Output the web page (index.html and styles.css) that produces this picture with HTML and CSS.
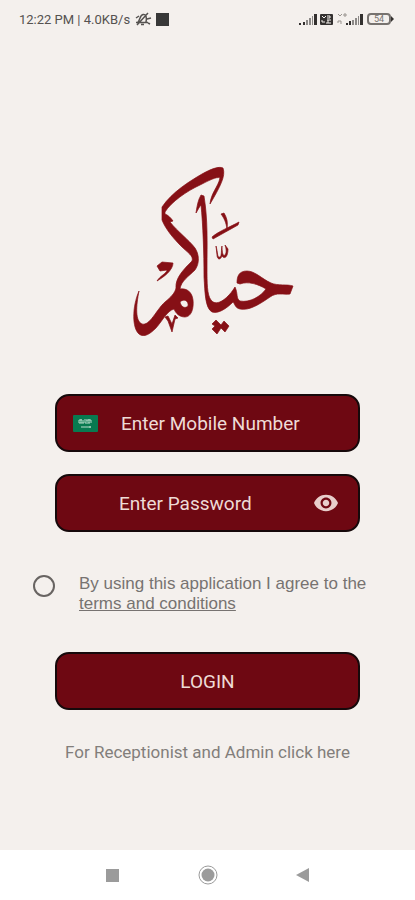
FILE: index.html
```html
<!DOCTYPE html>
<html lang="en">
<head>
<meta charset="utf-8">
<meta name="viewport" content="width=device-width, initial-scale=1">
<title>Login</title>
<link rel="stylesheet" href="styles.css">
</head>
<body>
<header class="status">
  <div class="status-group">
    <span>12:22 PM | 4.0KB/s</span>
    <svg class="mute" viewBox="0 0 18 16" width="18" height="16" aria-hidden="true">
      <path d="M4 11C6 9 6 4 9 3.500C12 3 13 6 12 11M2 11.500H14M7 13.500H10M2 7L5 5M13 8L17 7M14 12L16 13M3 14L14 2"/>
    </svg>
    <span class="block"></span>
  </div>
  <svg viewBox="0 0 96 16" width="96" height="16" aria-hidden="true">
    <g class="ink">
      <path d="M0 12h2v2H0zM4 11h2v3H4zM15 3h3v11h-3z"/>
      <path class="dim" d="M7 9h2v5H7zM10 7h2v7h-2zM13 5h1v9h-1z"/>
      <rect x="21" y="3" width="13" height="11" rx="1"/>
      <path d="M47 12h2v2h-2zM50 10h2v4h-2zM61 3h3v11h-3z"/>
      <path class="dim" d="M53 9h2v5h-2zM56 7h2v7h-2zM59 5h1v9h-1z"/>
    </g>
    <path class="volte" d="M23 5l2 2 2-2M28 5h3v2h-3M23 9v2h3M28 9h4M29 9v3M27 12h5"/>
    <path class="tiny" d="M39 3l2 2 2-2M44 4h4M46 2v4M39 12v-2h3M42 10v3"/>
    <rect class="battery" x="69" y="3" width="22" height="10" rx="3"/>
    <path class="ink" d="M92 5l3 3-3 3z"/>
    <text class="level" x="80" y="11">54</text>
  </svg>
</header>

<main class="screen">
  <svg class="logo" viewBox="130 164 166 172" width="166" height="172" role="img" aria-label="حياكم">
    <path d="M210 204C211 193 218 187 220 178C217 176 208 181 200 185C187 191 171 202 165 212L165 214C168 215 171 218 173 221L170 222C178 232 189 240 195 248C199 254 200 263 195 270C189 276 181 281 180 289C187 288 192 292 193 300C194 309 191 317 185 317C180 317 176 314 174 309C167 311 163 320 156 328C150 334 144 338 139 334C132 328 132 307 139 291C136 306 135 321 142 324C150 326 156 310 165 302C171 297 175 293 176 288C175 278 184 269 192 261C194 256 187 252 182 247C174 239 166 230 162 220L162 207C172 192 190 181 202 174C211 169 219 166 223 168C226 176 220 187 210 204ZM180 302C181 307 185 309 188 306C189 301 184 298 180 302Z" fill-rule="evenodd"/>
    <path d="M196 213C197 206 198 200 201 195L204 196C208 220 207 244 207 267C207 283 207 295 211 300C217 308 229 297 235 287C238 293 236 299 240 301C250 303 261 296 266 289C258 284 248 281 240 284L237 283C237 276 239 271 247 271C255 271 262 279 271 283C278 286 287 284 293 286L290 294C283 295 277 292 270 297C260 304 249 311 240 309C235 308 235 304 233 302C226 309 218 314 212 312C205 308 205 292 204 277C204 253 203 225 201 205C199 207 198 210 196 213Z"/>
    <path d="M221 214L224 213C227 218 228 222 227 229C226 222 224 218 221 214ZM212 237C219 231 230 227 239 222L238 225C230 230 221 234 213 239Z"/>
    <path d="M216 246C218 253 217 258 220 257C222 256 221 249 222 246C222 252 223 257 225 255C227 252 226 248 225 245L228 249C228 256 225 260 222 256C220 261 217 259 217 255Z"/>
    <path d="M157 266L162 262L173 263C173 270 164 277 157 281C160 276 167 273 167 270L160 271Z"/>
    <path d="M165 317L168 316L172 324L175 315L178 318L175 319L172 332L168 321Z"/>
    <path d="M216 320L221 325L224 321L229 326L225 332L221 328L217 334L212 329L215 326L212 324Z"/>
  </svg>

  <form class="form">
    <div class="field">
      <svg class="flag" viewBox="0 0 25 17" width="25" height="17" aria-hidden="true">
        <rect class="flag-bg" width="25" height="17" rx="1"/>
        <path class="flag-mark" d="M6 8V5M8 8V4M6 8h5M10 5v3M12 4v4M12 8h5M14 5v2M16 4v4M18 5v3M6 5h3M13 5h5"/>
        <path class="flag-sword" d="M8 12H18M17 11v2"/>
      </svg>
      <input class="entry" type="tel" placeholder="Enter Mobile Number" aria-label="Enter Mobile Number">
    </div>
    <div class="field">
      <input class="entry entry-password" type="password" placeholder="Enter Password" aria-label="Enter Password">
      <button class="eye" type="button" aria-label="Show password">
        <svg viewBox="1 4 22 16" width="24" height="18" aria-hidden="true"><path d="M12 4.500C7 4.500 2.730 7.610 1 12c1.730 4.390 6 7.500 11 7.500s9.270-3.110 11-7.500c-1.730-4.390-6-7.500-11-7.500zM12 17c-2.760 0-5-2.240-5-5s2.240-5 5-5 5 2.240 5 5-2.240 5-5 5zm0-8c-1.660 0-3 1.340-3 3s1.340 3 3 3 3-1.340 3-3-1.340-3-3-3z"/></svg>
      </button>
    </div>
    <div class="agree">
      <input class="radio" type="radio" id="agree">
      <label for="agree">By using this application I agree to the <a href="#terms">terms and conditions</a></label>
    </div>
    <button class="login" type="submit">LOGIN</button>
  </form>
  <a class="admin" href="#admin">For Receptionist and Admin click here</a>
</main>

<nav class="nav" aria-label="System">
  <button type="button" aria-label="Recent"><svg viewBox="0 0 20 20" width="20" height="20"><rect x="3" y="4" width="13" height="13"/></svg></button>
  <button type="button" aria-label="Home"><svg viewBox="0 0 20 20" width="20" height="20"><circle cx="10" cy="10" r="6.500"/><circle class="ring" cx="10" cy="10" r="9"/></svg></button>
  <button type="button" aria-label="Back"><svg viewBox="0 0 20 20" width="20" height="20"><path d="M3 10L16 3V17Z"/></svg></button>
</nav>
</body>
</html>
```
FILE: styles.css
```css
* { box-sizing: border-box; }

body {
  margin: 0;
  min-height: 100vh;
  display: flex;
  flex-direction: column;
  background: #f4f0ed;
  font-family: Roboto, "Liberation Sans", sans-serif;
}

button {
  padding: 0;
  border: 0;
  background: none;
  font: inherit;
}

svg { display: block; }

.status {
  display: flex;
  align-items: center;
  justify-content: space-between;
  height: 38px;
  padding: 0 20px 0 19px;
  color: #555250;
  font-size: 13px;
}

.status-group {
  display: flex;
  align-items: center;
  gap: 4px;
}

.mute { fill: none; stroke: #555250; stroke-width: 1.5; }
.block { width: 13px; height: 13px; background: #383838; }
.ink { fill: #33302f; }
.dim { fill: #8b8886; }
.volte { fill: none; stroke: #f4f0ed; }
.tiny { fill: none; stroke: #99948f; }
.battery { fill: none; stroke: #777370; stroke-width: 2; }
.level { fill: #777370; font-size: 9px; text-anchor: middle; }

.screen {
  flex: 1;
  display: flex;
  flex-direction: column;
  align-items: center;
  padding: 126px 0 40px;
}

.logo {
  margin-left: 10px;
  fill: #861016;
  stroke: #861016;
  stroke-width: 0.7;
  stroke-linejoin: round;
}

.form {
  align-self: stretch;
  display: flex;
  flex-direction: column;
  margin-top: 58px;
  padding: 0 55px;
}

.field,
.login {
  height: 58px;
  border: 2px solid #16090b;
  border-radius: 14px;
  background: #6e0812;
  color: #eedbd6;
  font-size: 19px;
}

.field {
  display: flex;
  align-items: center;
  padding: 0 20px 0 16px;
}

.field + .field { margin-top: 22px; }

.flag { flex: none; }
.flag-bg { fill: #087a50; }
.flag-mark,
.flag-sword { fill: none; stroke: #b9dccb; }

.entry {
  flex: 1;
  min-width: 0;
  height: 100%;
  padding: 0 0 0 23px;
  border: 0;
  outline: 0;
  background: none;
  color: inherit;
  font: inherit;
}

.entry-password { padding-left: 46px; }
.entry::placeholder { color: inherit; opacity: 1; }
.eye { fill: #e8cecb; }

.agree {
  display: flex;
  align-items: flex-start;
  gap: 24px;
  margin: 42px -12px 38px -22px;
  color: #777371;
  font-family: "Liberation Sans", sans-serif;
  font-size: 17px;
  line-height: 20px;
}

.agree a { color: inherit; }

.radio {
  appearance: none;
  flex: none;
  width: 22px;
  height: 22px;
  margin: 1px 0 0;
  border: 2px solid #686462;
  border-radius: 50%;
}

.radio:checked { background: #6e0812; }

.admin {
  margin-top: 32px;
  color: #827e7b;
  font-size: 17px;
  line-height: 20px;
  text-decoration: none;
}

.nav {
  display: flex;
  align-items: center;
  justify-content: center;
  gap: 75px;
  height: 50px;
  background: #fff;
}

.nav svg { fill: #9b9b9b; }
.nav .ring { fill: none; stroke: #9b9b9b; }
```
